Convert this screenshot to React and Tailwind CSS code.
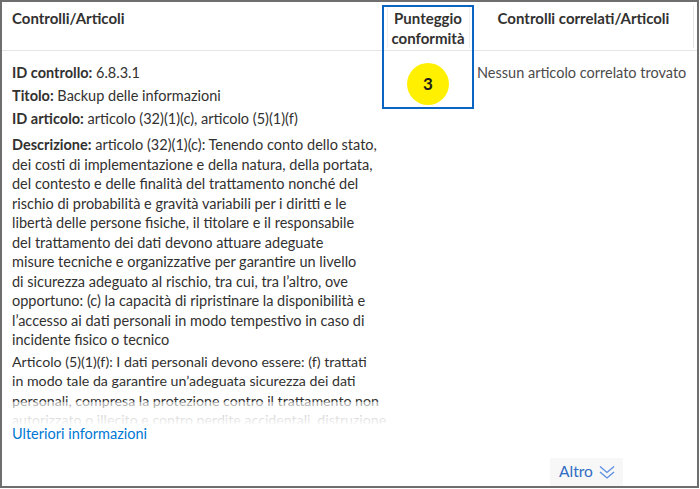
import { useState } from "react";

const descLines = [
  "dei costi di implementazione e della natura, della portata,",
  "del contesto e delle finalità del trattamento nonché del",
  "rischio di probabilità e gravità variabili per i diritti e le",
  "libertà delle persone fisiche, il titolare e il responsabile",
  "del trattamento dei dati devono attuare adeguate",
  "misure tecniche e organizzative per garantire un livello",
  "di sicurezza adeguato al rischio, tra cui, tra l’altro, ove",
  "opportuno: (c) la capacità di ripristinare la disponibilità e",
  "l’accesso ai dati personali in modo tempestivo in caso di",
  "incidente fisico o tecnico",
];

const articoloLines = [
  "Articolo (5)(1)(f): I dati personali devono essere: (f) trattati",
  "in modo tale da garantire un’adeguata sicurezza dei dati",
  "personali, compresa la protezione contro il trattamento non",
  "autorizzato o illecito e contro perdite accidentali, distruzione",
];

const ChevronsDown = () => (
  <svg width="18" height="16" viewBox="0 0 18 16" fill="none" stroke="#5a8ce0" strokeWidth="1.3">
    <polyline points="2,2.5 9,8.5 16,2.5" />
    <polyline points="2,8 9,14 16,8" />
  </svg>
);

export default function App() {
  const [expanded, setExpanded] = useState(false);

  return (
    <div className="w-[700px] h-[489px] bg-white font-['Lato',sans-serif] text-[#323130]">
      <div className="relative flex flex-col w-[699px] h-[488px] border-2 border-[#6e6e6e] overflow-hidden">
        {/* intestazione */}
        <div className="grid grid-cols-[378px_96px_1fr] h-[49px] shrink-0 border-b border-[#e6e6e6] text-[15px] font-bold leading-[20px]">
          <div className="pl-[10px] pt-[6px]">Controlli/Articoli</div>
          <div className="flex justify-center pt-[4px] pb-[4px]">
            <div className="flex flex-col items-center px-[4px] pt-[2px] border-x border-[#efefef]">
              <span>Punteggio</span>
              <span>conformità</span>
            </div>
          </div>
          <div className="flex pt-[4px] pb-[4px]">
            <div className="flex-1 text-center pt-[2px] pr-[2px]">Controlli correlati/Articoli</div>
            <div className="w-[4px] border-l border-[#e6e6e6]" />
          </div>
        </div>

        {/* contenuto */}
        <div className="grid grid-cols-[378px_96px_1fr] flex-1 text-[14.5px]">
          <div className="pl-[10px] pt-[12px]">
            <div className="relative w-[375px] h-[361px] overflow-hidden">
              <p className="leading-[20px]"><b>ID controllo:</b> 6.8.3.1</p>
              <p className="leading-[20px] mt-[3px]"><b>Titolo:</b> Backup delle informazioni</p>
              <p className="leading-[20px] mt-[3px]"><b>ID articolo:</b> articolo (32)(1)(c), articolo (5)(1)(f)</p>
              <p className="leading-[19.5px] mt-[6px] whitespace-nowrap">
                <b>Descrizione:</b> articolo (32)(1)(c): Tenendo conto dello stato,
                {descLines.map((l) => (
                  <span key={l}>
                    <br />
                    {l}
                  </span>
                ))}
              </p>
              <p className="leading-[19.5px] mt-[2px] text-[14.2px] whitespace-nowrap">
                {articoloLines.map((l, i) => (
                  <span key={l}>
                    {i > 0 && <br />}
                    {l}
                  </span>
                ))}
              </p>
              {!expanded && (
                <div className="absolute left-0 right-0 bottom-0 h-[22px] bg-linear-to-b from-white/55 to-white/95" />
              )}
            </div>
            <a href="#" className="block leading-[20px] text-[#0078d4]">Ulteriori informazioni</a>
          </div>

          <div className="flex justify-center pt-[12px]">
            <div className="w-[42px] h-[42px] rounded-full bg-[#fff000] flex items-center justify-center text-[17px] font-bold text-[#1b1b1b]">
              3
            </div>
          </div>

          <div className="pl-[1px] pt-[12px] leading-[20px] text-[#4b4b4b] whitespace-nowrap">Nessun articolo correlato trovato</div>
        </div>

        {/* piè di pagina */}
        <div className="grid grid-cols-[378px_96px_1fr] h-[28px] shrink-0">
          <div />
          <div />
          <div className="flex justify-center">
            <button
              onClick={() => setExpanded((e) => !e)}
              className="flex items-center gap-[5px] h-[28px] pl-[9px] pr-[7px] bg-[#f7f7f7] text-[15.5px] text-[#2f6cc2]"
            >
              Altro <ChevronsDown />
            </button>
          </div>
        </div>

        {/* bordo di focus colonna punteggio */}
        <div className="absolute left-[380px] top-[3px] w-[92px] h-[104px] border-2 border-[#0a64c2] pointer-events-none" />
      </div>
    </div>
  );
}
